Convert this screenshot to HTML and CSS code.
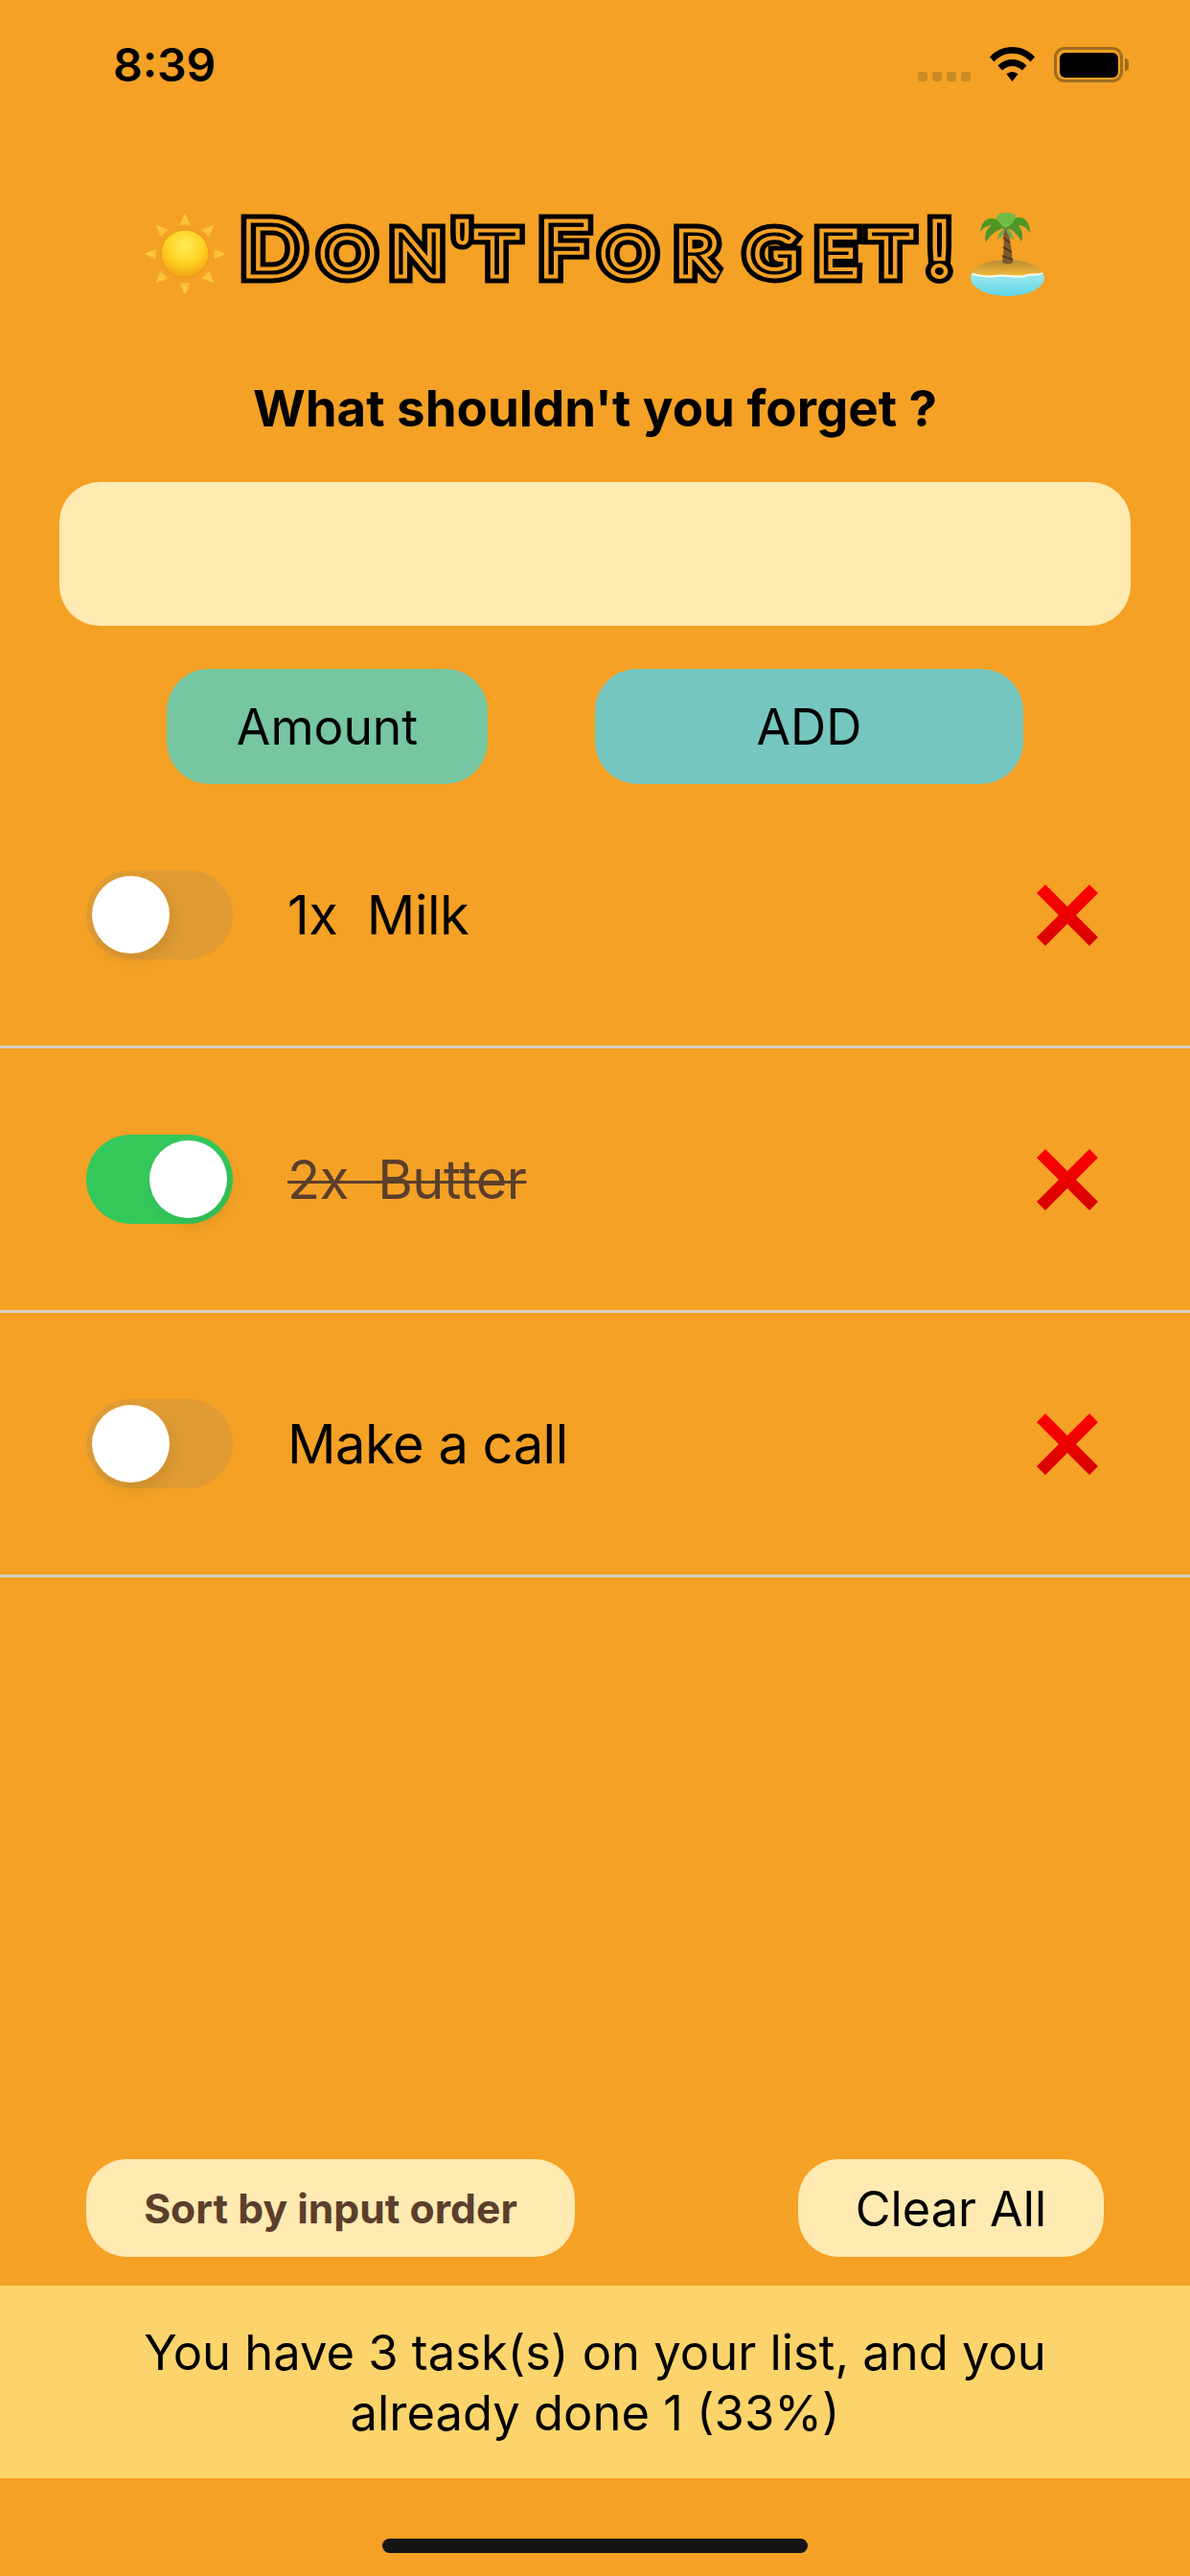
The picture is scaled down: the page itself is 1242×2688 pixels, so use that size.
FILE: index.html
```html
<!DOCTYPE html>
<html lang="en">
<head>
    <meta charset="UTF-8">
    <meta name="viewport" content="width=device-width, initial-scale=1.0">
    <title>Don't Forget!</title>
    <link rel="stylesheet" href="styles.css">
</head>
<body>
    <div class="status">
        <span class="clock">8:39</span>
        <div class="status-icons">
            <div class="dots"><i></i><i></i><i></i><i></i></div>
            <svg class="wifi" viewBox="0 0 47 36" width="47" height="36">
                <path d="M0 10.5C6 3.8 14.300 0 23.500 0S41 3.800 47 10.500L42.500 15.500C37.500 9.900 31 6.800 23.500 6.800S9.500 9.900 4.500 15.500Z"/>
                <path d="M8.500 19.500C12.300 15.400 17.500 13 23.500 13S34.700 15.400 38.500 19.500L33.800 24.400C31 21.500 27.500 19.900 23.500 19.900S16 21.500 13.200 24.400Z"/>
                <path d="M17.500 28.300C19.100 26.800 21.200 25.900 23.500 25.900S27.900 26.800 29.500 28.300L23.500 36Z"/>
            </svg>
            <div class="battery"><div class="battery-body"><div class="battery-level"></div></div><div class="battery-tip"></div></div>
        </div>
    </div>

    <div class="title-row">
        <svg class="emoji-sun" viewBox="0 0 86 87" width="86" height="87">
            <defs>
                <radialGradient id="sunFill" cx="50%" cy="32%" r="72%">
                    <stop offset="0" stop-color="#ffee55"/>
                    <stop offset="0.55" stop-color="#fdd022"/>
                    <stop offset="1" stop-color="#f09a12"/>
                </radialGradient>
                <linearGradient id="rayFill" x1="0" y1="0" x2="0" y2="1">
                    <stop offset="0" stop-color="#ffd23d"/>
                    <stop offset="1" stop-color="#f9bd33"/>
                </linearGradient>
                <polygon id="ray" points="43,0 37,13 49,13" fill="url(#rayFill)" stroke="#eda42b" stroke-width="0.6"/>
            </defs>
            <use href="#ray"/>
            <use href="#ray" transform="rotate(45 43 43)"/>
            <use href="#ray" transform="rotate(90 43 43)"/>
            <use href="#ray" transform="rotate(135 43 43)"/>
            <use href="#ray" transform="rotate(180 43 43)"/>
            <use href="#ray" transform="rotate(225 43 43)"/>
            <use href="#ray" transform="rotate(270 43 43)"/>
            <use href="#ray" transform="rotate(315 43 43)"/>
            <circle cx="43" cy="43" r="25" fill="url(#sunFill)" stroke="#e8921c" stroke-width="0.8"/>
        </svg>

        <!-- three lines per stroke: same text stacked with shrinking outlines, stretched a bit wider -->
        <svg class="title" viewBox="0 0 760 100" width="760" height="100" role="img" aria-label="Don't Forget!">
            <g transform="scale(1.12 1)">
                <g class="title-outer">
                    <text id="titleText" y="76.500" text-anchor="middle"><tspan class="big" x="40.600">D</tspan><tspan class="small" x="109.400 174.600">on</tspan><tspan class="big" x="216.500">'</tspan><tspan class="small" x="250.900">t</tspan> <tspan class="big" x="310.700">F</tspan><tspan class="small" x="371 435.300 504.500 565.200 615.600">orget</tspan><tspan class="big" x="661.200">!</tspan></text>
                </g>
                <g class="title-gap"><use href="#titleText"/></g>
                <g class="title-core"><use href="#titleText"/></g>
            </g>
        </svg>

        <svg class="emoji-island" viewBox="0 0 77 87" width="77" height="87">
            <defs>
                <linearGradient id="sandFill" x1="0" y1="0" x2="0" y2="1">
                    <stop offset="0" stop-color="#b98a2e"/>
                    <stop offset="1" stop-color="#f6bb3c"/>
                </linearGradient>
                <linearGradient id="waterFill" x1="0" y1="0" x2="0" y2="1">
                    <stop offset="0" stop-color="#c4f4ea"/>
                    <stop offset="1" stop-color="#5fd6ea"/>
                </linearGradient>
                <linearGradient id="leafFill" x1="0" y1="0" x2="0" y2="1">
                    <stop offset="0" stop-color="#4f9a1c"/>
                    <stop offset="1" stop-color="#4e8f3a"/>
                </linearGradient>
            </defs>
            <ellipse cx="38.500" cy="68" rx="38.500" ry="19" fill="url(#waterFill)"/>
            <path d="M2 64C4 54 20 49 38 49S72 54 75 63C68 67 64 62 56 66C46 68 36 64 26 66C16 68 8 65 2 64Z" fill="url(#sandFill)"/>
            <path d="M2 64C8 65 16 68 26 66C36 64 46 68 56 66C64 62 68 67 75 63" fill="none" stroke="#f4fbf2" stroke-width="2"/>
            <path d="M34 15L39 15C41 28 43 40 44 52C40 54 37 54 33 52C35 40 35 28 34 15Z" fill="#7d5a30"/>
            <path d="M34 26L41 31M34 36L43 41M33 45L44 49" stroke="#4b3216" stroke-width="1.500" fill="none"/>
            <path d="M36 15C26 1 12 3 10 20C14 15 18 13 22 13C16 17 14 24 16 31C20 23 27 18 36 15Z" fill="url(#leafFill)"/>
            <path d="M36 15C46 -1 62 2 62 21C58 15 54 13 50 13C54 18 55 24 53 30C49 22 43 17 36 15Z" fill="url(#leafFill)"/>
            <path d="M36 16C30 12 26 6 28 2C34 -1 42 -1 47 3C47 8 42 14 36 16Z" fill="#6fbd45"/>
            <path d="M36 16C32 18 29 22 28 28C33 25 36 21 36 16Z" fill="#69ad50"/>
            <path d="M37 16C41 18 44 22 45 28C40 26 38 22 37 16Z" fill="#69ad50"/>
        </svg>
    </div>

    <h2 class="question">What shouldn't you forget ?</h2>
    <input class="task-input" type="text" aria-label="Task">

    <div class="form-buttons">
        <button class="btn-amount">Amount</button>
        <button class="btn-add">ADD</button>
    </div>

    <div class="list">
        <div class="row">
            <div class="toggle"><div class="knob"></div></div>
            <span class="task">1x&nbsp; Milk</span>
            <svg class="remove" viewBox="0 0 64 64" width="64" height="64"><use href="#cross"/></svg>
        </div>
        <div class="row">
            <div class="toggle on"><div class="knob"></div></div>
            <span class="task done">2x&nbsp; Butter</span>
            <svg class="remove" viewBox="0 0 64 64" width="64" height="64"><use href="#cross"/></svg>
        </div>
        <div class="row">
            <div class="toggle"><div class="knob"></div></div>
            <span class="task">Make a call</span>
            <svg class="remove" viewBox="0 0 64 64" width="64" height="64"><use href="#cross"/></svg>
        </div>
    </div>

    <div class="actions">
        <button class="btn-sort">Sort by input order</button>
        <button class="btn-clear">Clear All</button>
    </div>

    <div class="summary">You have 3 task(s) on your list, and you<br>already done 1 (33%)</div>

    <div class="home-area"><div class="home-bar"></div></div>

    <!-- shared red cross -->
    <svg class="defs" width="0" height="0">
        <defs>
            <linearGradient id="crossFill" gradientUnits="userSpaceOnUse" x1="0" y1="0" x2="0" y2="64">
                <stop offset="0" stop-color="#ff0000"/>
                <stop offset="1" stop-color="#d60000"/>
            </linearGradient>
            <polygon id="cross" fill="url(#crossFill)" points="9,0 32,23 55,0 64,9 41,32 64,55 55,64 32,41 9,64 0,55 23,32 0,9"/>
        </defs>
    </svg>
</body>
</html>
```

FILE: styles.css
```css
* {
    box-sizing: border-box;
}
body {
    margin: 0;
    width: 1242px;
    height: 2688px;
    display: flex;
    flex-direction: column;
    background-color: #f4a125;
    color: #000;
    font-family: Inter, "Liberation Sans", sans-serif;
    overflow: hidden;
}
button {
    border: none;
    font-family: inherit;
    color: #000;
    padding: 0;
}

/* status bar */
.status {
    height: 110px;
    flex: none;
    display: flex;
    justify-content: space-between;
    padding: 43px 64px 0 118px;
}
.clock {
    font-size: 48px;
    line-height: 50px;
    font-weight: 600;
}
.status-icons {
    display: flex;
    align-items: flex-start;
    padding-top: 6px;
}
.dots {
    display: flex;
    gap: 5px;
    margin-top: 26px;
    margin-right: 20px;
}
.dots i {
    width: 10px;
    height: 10px;
    border-radius: 3px;
    background-color: #c98b25;
}
.wifi {
    margin-right: 20px;
}
.battery {
    display: flex;
    align-items: center;
}
.battery-body {
    width: 72px;
    height: 37px;
    border: 3.5px solid #a06d1f;
    border-radius: 11px;
    padding: 2.500px;
}
.battery-level {
    height: 100%;
    background-color: #000;
    border-radius: 6px;
}
.battery-tip {
    width: 4px;
    height: 13px;
    margin-left: 2px;
    background-color: #a06d1f;
    border-radius: 0 4px 4px 0;
}

/* title */
.title-row {
    margin-top: 112px;
    height: 88px;
    flex: none;
    display: flex;
    align-items: flex-start;
    padding-left: 150px;
}
.title {
    flex: none;
    margin: -12px 13px 0 4px;
    font-family: Lato, sans-serif;
    font-weight: 300;
    text-transform: uppercase;
    stroke-miterlimit: 2;
}
.title .big {
    font-size: 75px;
}
.title .small {
    font-size: 61px;
}
.title-outer {
    fill: #000;
    stroke: #000;
    stroke-width: 19px;
}
.title-gap {
    fill: #f4a125;
    stroke: #f4a125;
    stroke-width: 9px;
}
.title-core {
    fill: #000;
    stroke: #000;
    stroke-width: 1px;
}

.question {
    margin: 84px 0 0;
    height: 64px;
    flex: none;
    text-align: center;
    font-size: 52.800px;
    line-height: 64px;
    font-weight: 700;
}
.task-input {
    display: block;
    flex: none;
    margin: 45px 0 0 62px;
    width: 1118px;
    height: 150px;
    border: none;
    border-radius: 42px;
    background-color: #ffeab1;
}
.form-buttons {
    margin-top: 45px;
    flex: none;
    display: flex;
    justify-content: center;
    gap: 112px;
}
.form-buttons button {
    height: 120px;
    border-radius: 44px;
    font-size: 51.500px;
}
.btn-amount {
    width: 335px;
    background-color: #76c6a2;
}
.btn-add {
    width: 447px;
    background-color: #76c6c0;
}

/* task list */
.list {
    flex: 1;
}
.row {
    height: 276px;
    display: flex;
    align-items: center;
    padding: 0 96px 0 90px;
    border-bottom: 3px solid #d6d0c6;
}
.toggle {
    width: 153px;
    height: 93px;
    padding: 6px;
    border-radius: 47px;
    background-color: #e09b33;
}
.toggle.on {
    display: flex;
    justify-content: flex-end;
    background-color: #34c85a;
}
.knob {
    width: 81px;
    height: 81px;
    border-radius: 50%;
    background-color: #fff;
    box-shadow: 5px 8px 16px rgba(0, 0, 0, 0.08);
}
.task {
    margin-left: 57px;
    font-size: 56px;
    letter-spacing: -0.500px;
    line-height: 70px;
}
.task.done {
    color: #5b3e2c;
    text-decoration: line-through;
    text-decoration-thickness: 3px;
}
.remove {
    margin-left: auto;
}
.defs {
    position: absolute;
}

/* bottom */
.actions {
    flex: none;
    display: flex;
    justify-content: space-between;
    padding: 0 90px;
    margin-bottom: 30px;
}
.actions button {
    height: 102px;
    border-radius: 42px;
    background-color: #ffeab1;
}
.btn-sort {
    width: 510px;
    font-size: 42.700px;
    font-weight: 700;
    color: #5b3e2c;
}
.btn-clear {
    width: 319px;
    font-size: 50.400px;
}
.summary {
    flex: none;
    height: 201px;
    padding-top: 38px;
    background-color: #fcd46b;
    text-align: center;
    font-size: 50.700px;
    line-height: 63px;
}
.home-area {
    flex: none;
    height: 102px;
    padding-top: 63px;
}
.home-bar {
    width: 444px;
    height: 15px;
    margin: 0 auto;
    border-radius: 8px;
    background-color: #151515;
}
```
